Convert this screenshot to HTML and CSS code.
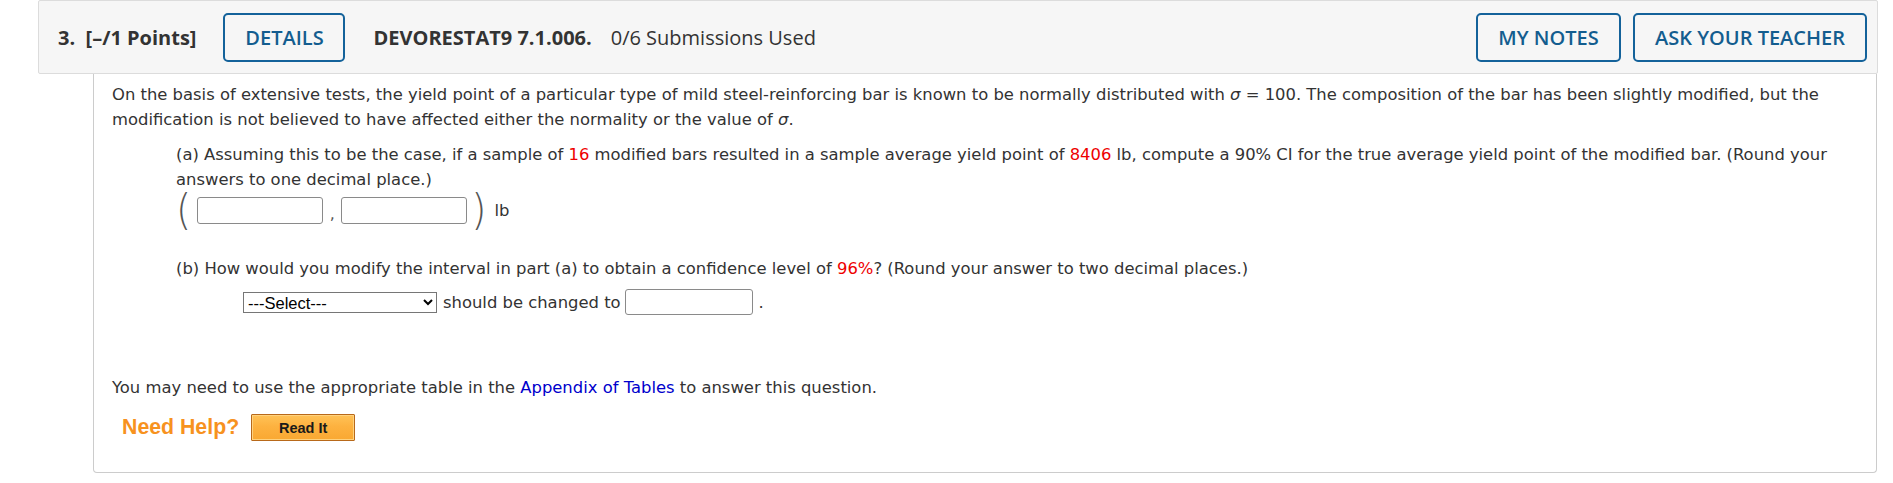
FILE: index.html
```html
<!DOCTYPE html>
<html lang="en">
<head>
<meta charset="utf-8">
<title>Question 3</title>
<link rel="stylesheet" href="styles.css">
</head>
<body>
<div class="question">
  <div class="qhead">
    <span class="qnum">3.&nbsp; [–/1 Points]</span>
    <button class="hbtn details">DETAILS</button>
    <span class="qid">DEVORESTAT9 7.1.006.</span>
    <span class="subs">0/6 Submissions Used</span>
    <span class="spacer"></span>
    <button class="hbtn notes">MY NOTES</button>
    <button class="hbtn ask">ASK YOUR TEACHER</button>
  </div>
  <div class="qbody">
    <p class="intro">On the basis of extensive tests, the yield point of a particular type of mild steel-reinforcing bar is known to be normally distributed with <i>σ</i> = 100. The composition of the bar has been slightly modified, but the modification is not believed to have affected either the normality or the value of <i>σ</i>.</p>
    <div class="part">
      <p class="ptext">(a) Assuming this to be the case, if a sample of <span class="red">16</span> modified bars resulted in a sample average yield point of <span class="red">8406</span> lb, compute a 90% CI for the true average yield point of the modified bar. (Round your answers to one decimal place.)</p>
      <div class="interval">
        <span class="paren">(</span>
        <input class="ans first" type="text">
        <span class="comma">,</span>
        <input class="ans" type="text">
        <span class="paren close">)</span>
        <span class="unit">lb</span>
      </div>
      <p class="ptext partb">(b) How would you modify the interval in part (a) to obtain a confidence level of <span class="red">96%</span>? (Round your answer to two decimal places.)</p>
      <div class="selrow">
        <select class="sel"><option>---Select---</option></select>
        <span class="selText">should be changed to</span>
        <input class="ans small" type="text">
        <span class="dot">.</span>
      </div>
    </div>
    <p class="note">You may need to use the appropriate table in the <a class="link" href="#">Appendix of Tables</a> to answer this question.</p>
    <div class="help">
      <span class="helpText">Need Help?</span>
      <button class="readit">Read It</button>
    </div>
  </div>
</div>
</body>
</html>
```
FILE: styles.css
```css
html, body {
  margin: 0;
  padding: 0;
  background: #ffffff;
}

.question {
  margin: 0 15px 0 38px;
}

.qhead {
  display: flex;
  align-items: center;
  height: 74px;
  box-sizing: border-box;
  padding: 11px 10px 11px 19px;
  background: #f6f6f6;
  border: 1px solid #dcdcdc;
  border-radius: 2px;
  font-family: "Open Sans", "DejaVu Sans", sans-serif;
  font-size: 20px;
  color: #333333;
}

.qnum {
  font-weight: 700;
  white-space: pre;
}

.hbtn {
  height: 49px;
  box-sizing: border-box;
  border: 2px solid #14629a;
  border-radius: 5px;
  background: transparent;
  color: #135d8f;
  font-family: "Open Sans", sans-serif;
  font-size: 20px;
  font-weight: 600;
  padding: 0;
  cursor: pointer;
}

.details {
  width: 122px;
  margin-left: 27px;
}

.qid {
  font-weight: 700;
  margin-left: 28px;
}

.subs {
  margin-left: 19px;
}

.spacer {
  flex: 1;
}

.notes {
  width: 145px;
}

.ask {
  width: 234px;
  margin-left: 12px;
}

.qbody {
  margin: 0 1px 0 55px;
  padding: 8px 18px 31px 18px;
  border: 1px solid #cccccc;
  border-top: none;
  border-radius: 0 0 4px 4px;
  font-family: Verdana, "DejaVu Sans", sans-serif;
  font-size: 16.4px;
  line-height: 25px;
  color: #333333;
}

.qbody p {
  margin: 0;
}

.part {
  margin: 10px 0 0 64px;
}

.red {
  color: #ee0000;
}

.interval {
  display: flex;
  align-items: center;
  height: 35px;
  margin-top: 1px;
}

.paren {
  font-family: "DejaVu Sans", sans-serif;
  font-weight: 200;
  font-size: 39px;
  line-height: 35px;
  color: #555555;
  transform: scaleY(1.1);
}

.ans {
  width: 126px;
  height: 27px;
  box-sizing: border-box;
  border: 1px solid #8a8a8a;
  border-radius: 3px;
  padding: 2px 4px;
  font-size: 16px;
  background: #ffffff;
}

.first {
  margin-left: 6px;
}

.comma {
  width: 18px;
  text-align: center;
  color: #555555;
  font-size: 16px;
  line-height: 16px;
  margin-top: 6px;
}

.close {
  margin-left: 4px;
}

.unit {
  margin-left: 8px;
}

.partb {
  margin-top: 28px !important;
}

.selrow {
  display: flex;
  align-items: center;
  height: 26px;
  margin: 8px 0 0 67px;
}

.sel {
  width: 194px;
  height: 21px;
  box-sizing: border-box;
  font-family: Arial, "Liberation Sans", sans-serif;
  font-size: 16.5px;
  color: #000000;
  border: 1px solid #767676;
  border-radius: 0;
  background: #ffffff;
  padding: 0;
}

.selText {
  margin-left: 6px;
}

.small {
  width: 128px;
  height: 26px;
  margin-left: 4px;
}

.dot {
  margin-left: 6px;
}

.note {
  margin-top: 60px !important;
}

.link {
  color: #0000cc;
  text-decoration: none;
}

.help {
  display: flex;
  align-items: center;
  height: 27px;
  margin: 14px 0 0 10px;
}

.helpText {
  font-family: Arial, "Liberation Sans", sans-serif;
  font-weight: 700;
  font-size: 21.3px;
  color: #f7921e;
}

.readit {
  margin-left: 12px;
  width: 104px;
  height: 27px;
  box-sizing: border-box;
  border: 1px solid #b8691a;
  box-shadow: inset 0 0 0 1px #ffd27e;
  border-radius: 1px;
  background: linear-gradient(#ffc257, #fdb240 45%, #f9a832);
  font-family: Arial, "Liberation Sans", sans-serif;
  font-weight: 700;
  font-size: 14.5px;
  color: #1a1a1a;
  padding: 0;
  cursor: pointer;
}
```
